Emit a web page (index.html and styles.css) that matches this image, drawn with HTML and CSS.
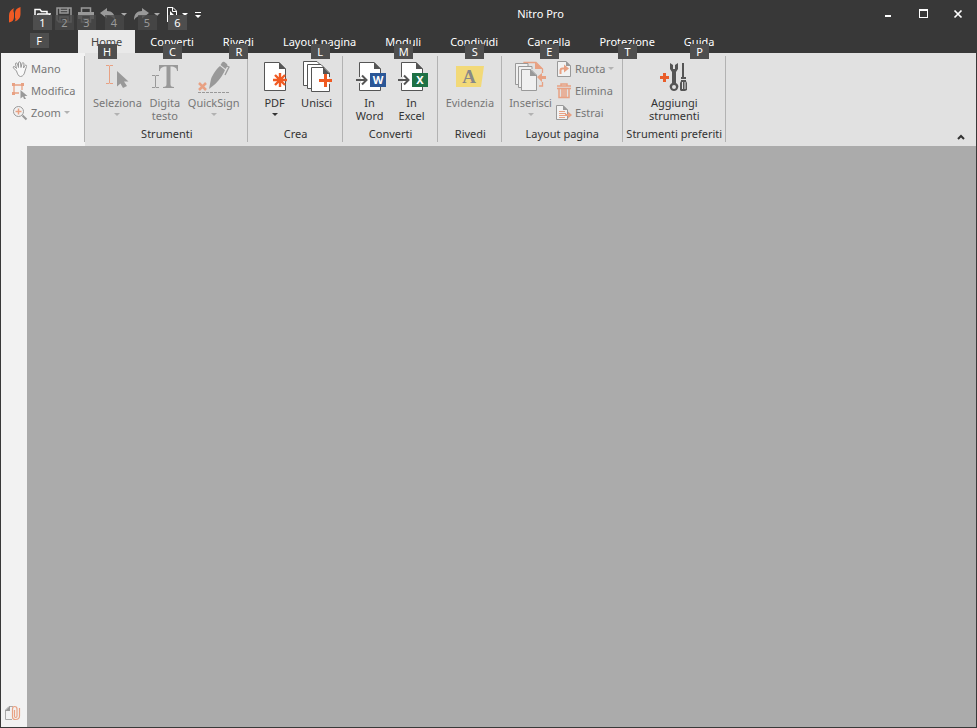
FILE: index.html
```html
<!DOCTYPE html>
<html lang="it">
<head>
<meta charset="utf-8">
<title>Nitro Pro</title>
<link rel="stylesheet" href="styles.css">
</head>
<body>
<div class="window">
  <header class="titlebar">
    <svg class="logo" viewBox="0 0 14 18" aria-hidden="true"><path fill="#f15a24" d="M6.500 2C3 3.500 1 6 1 9.500V16.500C4.500 16 6 14 6 11V7L5.500 5.500C5.300 4 5.500 3 6.500 2ZM12.500 1C9 2 7 4 7 7V11.500L7.500 13Q7.500 14.500 6.500 15.500C10.500 14.500 12.500 11.500 12.500 8Z"/></svg>
    <div class="quick">
      <button class="q" aria-label="Apri"><svg width="18" height="16" viewBox="0 0 18 16"><path fill="none" stroke="#fff" stroke-width="1.500" d="M2 13V2.500H7L8.500 4.500H14V7M2 13L5 7H17L14 13Z"/></svg><kbd>1</kbd></button>
      <button class="q" disabled aria-label="Salva"><svg width="16" height="16" viewBox="0 0 16 16"><path fill="none" stroke="#999" stroke-width="1.500" d="M1 1H15V15H3L1 13ZM4 1V6H12V1M4 15V10H12V15M4 3.500H12"/></svg><kbd>2</kbd></button>
      <button class="q" disabled aria-label="Stampa"><svg width="16" height="16" viewBox="0 0 16 16"><path fill="#999" d="M0 5H16V12H13V9H3V12H0Z"/><path fill="none" stroke="#999" stroke-width="1.500" d="M3.500 5V1H12.500V5M3.500 9V15H12.500V9M5 12H11"/></svg><kbd>3</kbd></button>
      <button class="q split" disabled aria-label="Annulla"><svg width="16" height="16" viewBox="0 0 16 16"><path fill="#999" d="M0 6L7 1V4C12 4 15 7 15 13C13 10 11 8.500 7 8.500V11.500Z"/></svg><i class="caret"></i><kbd>4</kbd></button>
      <button class="q split" disabled aria-label="Ripeti"><svg width="16" height="16" viewBox="0 0 16 16"><path fill="#999" d="M16 6L9 1V4C4 4 1 7 1 13C3 10 5 8.500 9 8.500V11.500Z"/></svg><i class="caret"></i><kbd>5</kbd></button>
      <button class="q split pick" aria-label="Selezione"><svg width="12" height="16" viewBox="0 0 12 16"><path fill="none" stroke="#fff" d="M1.500 15V.5H7L10.500 4V14M6.500 1V4.500H10"/><path fill="#fff" d="M4 4V13L6 11L8 15L9 14L7 10H10Z"/></svg><i class="caret"></i><kbd>6</kbd></button>
      <button class="q more" aria-label="Personalizza"><svg width="8" height="8" viewBox="0 0 8 8"><path fill="#fff" d="M1 1H7V2H1ZM1 4H7L4 7Z"/></svg></button>
    </div>
    <h1>Nitro Pro</h1>
    <div class="controls">
      <button aria-label="Riduci a icona"><svg width="12" height="12" viewBox="0 0 12 12"><path fill="#fff" d="M3 7H9V9H3Z"/></svg></button>
      <button aria-label="Ingrandisci"><svg width="12" height="12" viewBox="0 0 12 12"><path fill="#fff" fill-rule="evenodd" d="M2 1H11V10H2ZM3 3V9H10V3Z"/></svg></button>
      <button aria-label="Chiudi"><svg width="12" height="12" viewBox="0 0 12 12"><path stroke="#fff" stroke-width="1.700" d="M2.500 2.500L9.500 9.500M9.500 2.500L2.500 9.500"/></svg></button>
    </div>
  </header>
  <nav class="tabs">
    <button class="file" aria-label="File"><kbd>F</kbd></button>
    <button class="tab active">Home<kbd>H</kbd></button>
    <button class="tab">Converti<kbd>C</kbd></button>
    <button class="tab">Rivedi<kbd>R</kbd></button>
    <button class="tab">Layout pagina<kbd>L</kbd></button>
    <button class="tab">Moduli<kbd>M</kbd></button>
    <button class="tab">Condividi<kbd>S</kbd></button>
    <button class="tab">Cancella<kbd>E</kbd></button>
    <button class="tab">Protezione<kbd>T</kbd></button>
    <button class="tab">Guida<kbd>P</kbd></button>
  </nav>
  <div class="ribbon">
    <section class="basics">
      <button class="small" disabled><svg width="16" height="16" viewBox="0 0 16 16"><path fill="#f8f8f8" stroke="#999" d="M4.500 10L1.500 7C.5 5.500 2 5 3 6L4.500 7.500L3.500 3C3.500 1.500 5 1.500 5.500 3L6.500 6.500L6.500 2C6.500 .3 8.500 .3 8.500 2L9 6.500L10 2.500C10.500 1 12 1.500 12 3L11.500 7L13 4.500C14 3.500 15 4.500 14.500 5.500L13 10C12.500 13 11 15.500 8.500 15.500C6.500 15.500 5.500 13 4.500 10Z"/></svg>Mano</button>
      <button class="small" disabled><svg width="16" height="16" viewBox="0 0 16 16"><path fill="none" stroke="#e8a183" stroke-width="1.300" d="M2 2H10V10H2Z"/><path fill="#e8a183" d="M0 0H3V3H0ZM9 0H12V3H9ZM0 9H3V12H0Z"/><path fill="#f2f2f2" d="M7 7H12V13H7Z"/><path fill="#999" d="M8.500 7L15.500 13H12.500L14 16H12L11 13.500L8.500 15.500Z"/></svg>Modifica</button>
      <button class="small" disabled><svg width="16" height="16" viewBox="0 0 16 16"><circle cx="6.500" cy="6.500" r="5" fill="none" stroke="#999"/><path stroke="#999" stroke-width="2" d="M10.500 10.500L14.500 14.500"/><path stroke="#e8a183" stroke-width="1.500" d="M3.500 6.500H9.500M6.500 3.500V9.500"/></svg>Zoom<i class="caret"></i></button>
    </section>
    <section class="group">
      <div class="tools spaced">
        <button class="big" disabled><svg width="32" height="32" viewBox="0 0 32 32"><path fill="none" stroke="#e8a183" d="M5 4.500H8L8.500 5L9 4.500H12M8.500 5V22M5 22.500H8L8.500 22L9 22.500H12"/><path fill="#999" d="M16 10L27.500 20.500H23L26 25L22 27L19.500 22.500L16 25.500Z"/></svg><span>Seleziona</span><i class="caret"></i></button>
        <button class="big" disabled><svg width="32" height="32" viewBox="0 0 32 32"><path fill="#999" d="M10 4H29V10H28C28 7 26 5.500 21.500 5.500V23C21.500 25 22 26 25 26V27H14V26C17 26 17.500 25 17.500 23V5.500C13 5.500 11 7 11 10H10Z"/><path fill="none" stroke="#999" d="M3 14.500H6L6.500 15L7 14.500H10M6.500 15V26M3 26.500H6L6.500 26L7 26.500H10"/></svg><span>Digita<br>testo</span></button>
        <button class="big" disabled><svg width="32" height="32" viewBox="0 0 32 32"><path stroke="#e8a183" stroke-width="2.500" d="M1 22L8 29M8 22L1 29"/><path fill="#999" d="M11 28L13 18C15 13 19 7 22 5L27 9C25 14 20 21 16 24ZM22.500 4C24 1 25 0 26.500 1L29 3C30 4 29 6 27.500 8Z"/><path fill="none" stroke="#999" stroke-width="1.300" d="M27.500 4.500L31 6L27 14"/><path stroke="#999" stroke-dasharray="3 1" d="M0 31.500H32"/></svg><span>QuickSign</span><i class="caret"></i></button>
      </div>
      <h2>Strumenti</h2>
    </section>
    <section class="group">
      <div class="tools">
        <button class="big"><svg width="32" height="32" viewBox="0 0 32 32"><path fill="#fff" stroke="#555" d="M5.500 1.500H20L26.500 8V29.500H5.500Z"/><path fill="#555" d="M20 1L27 8H20Z"/><path fill="#fff" d="M16 12H26V27H16Z"/><path fill="#e1e1e1" d="M27 12H28V27H27Z"/><path stroke="#f05a22" stroke-width="2.400" d="M21 12V26M14 19H28M16 14L26 24M26 14L16 24"/></svg><span>PDF</span><i class="caret"></i></button>
        <button class="big"><svg width="32" height="32" viewBox="0 0 32 32"><g fill="#fff" stroke="#555"><path d="M2.500 .5H16L19.500 4V24.500H2.500Z"/><path d="M6.500 3.500H20L23.500 7V27.500H6.500Z"/><path d="M10.500 6.500H23L28.500 12V30.500H10.500Z"/></g><path fill="#555" d="M22 6L29 13H22Z"/><path fill="#fff" d="M27 15H28V24H27Z"/><path fill="#e1e1e1" d="M28 16H29V23H28Z"/><path stroke="#f05a22" stroke-width="3" d="M18 19.500H31M24.500 13V26"/></svg><span>Unisci</span></button>
      </div>
      <h2>Crea</h2>
    </section>
    <section class="group">
      <div class="tools">
        <button class="big"><svg width="32" height="32" viewBox="0 0 32 32"><path fill="#fff" stroke="#555" d="M5.500 1.500H20L26.500 8V29.500H5.500Z"/><path fill="#555" d="M20 1L27 8H20Z"/><path stroke="#e1e1e1" stroke-width="6" d="M2 19H7"/><path fill="none" stroke="#555" stroke-width="2" d="M2 19H12M8 14.500L12.500 19L8 23.500"/><path fill="#2b5797" d="M16 12H32V26H16Z"/><text class="badge" x="24" y="23">W</text></svg><span>In<br>Word</span></button>
        <button class="big"><svg width="32" height="32" viewBox="0 0 32 32"><path fill="#fff" stroke="#555" d="M5.500 1.500H20L26.500 8V29.500H5.500Z"/><path fill="#555" d="M20 1L27 8H20Z"/><path stroke="#e1e1e1" stroke-width="6" d="M2 19H7"/><path fill="none" stroke="#555" stroke-width="2" d="M2 19H12M8 14.500L12.500 19L8 23.500"/><path fill="#1e7145" d="M16 12H32V26H16Z"/><text class="badge" x="24" y="23">X</text></svg><span>In<br>Excel</span></button>
      </div>
      <h2>Converti</h2>
    </section>
    <section class="group">
      <div class="tools spaced">
        <button class="big" disabled><svg width="32" height="32" viewBox="0 0 32 32"><path fill="#f2d978" d="M2 5H30L27 26H2Z"/><text class="letter" x="15" y="22">A</text></svg><span>Evidenzia</span></button>
      </div>
      <h2>Rivedi</h2>
    </section>
    <section class="group layout">
      <div class="tools spaced">
        <button class="big" disabled><svg width="32" height="32" viewBox="0 0 32 32"><path fill="none" stroke="#e8a183" stroke-width="1.300" d="M9 4V1.500H21L27.500 8V12M24 25H27.500V21"/><path fill="#e8a183" d="M20 1L28 8H20ZM22 16L27 12V15H31V18H27V21Z"/><path fill="#f0f0f0" stroke="#999" d="M3 23.500H.5V2.500H13V5M6 26.500H3.500V5.500H17V8"/><path fill="#f0f0f0" stroke="#999" d="M6.500 8.500H16L21.500 14V29.500H6.500Z"/><path fill="#999" d="M15 8L22 15H15Z"/></svg><span>Inserisci</span><i class="caret"></i></button>
        <div class="stack">
          <button class="small" disabled><svg width="16" height="16" viewBox="0 0 16 16"><path fill="#f2f2f2" stroke="#999" d="M1.500 .5H10L14.500 5V15.500H1.500Z"/><path fill="#999" d="M10 0L15 5H10Z"/><path fill="none" stroke="#e8a183" stroke-width="2" d="M4.500 13V9.500Q4.500 7.500 6.500 7.500H9"/><path fill="#e8a183" d="M8 3.500L13 7.500L8 11.500Z"/></svg>Ruota<i class="caret"></i></button>
          <button class="small" disabled><svg width="16" height="16" viewBox="0 0 16 16"><path fill="none" stroke="#e8a183" stroke-width="1.500" d="M1 3H15M5 3V1H11V3M1 5.500H15M3 6V14.500H13V6M6 6V14M8 6V14M10 6V14"/></svg>Elimina</button>
          <button class="small" disabled><svg width="16" height="16" viewBox="0 0 16 16"><path fill="#f2f2f2" stroke="#999" d="M.5 .5H7L11.500 5V14.500H.5Z"/><path fill="#999" d="M7 0L12 5H7Z"/><path stroke="#e8a183" d="M3 6.500H9M3 8.500H10M3 10.500H10M3 12.500H9"/><path fill="#e8a183" d="M9 9H12V6.500L16 10L12 13.500V11H9Z"/></svg>Estrai</button>
        </div>
      </div>
      <h2>Layout pagina</h2>
    </section>
    <section class="group favorites">
      <div class="tools">
        <button class="big"><svg width="32" height="32" viewBox="0 0 32 32"><path stroke="#e95d2a" stroke-width="3" d="M2 16.500H11M6.500 12V21"/><path fill="#555" d="M12 2L15 4V8H17V4L20 2V8L18 11V22C20 23 21 25 20 27C19 31 13 31 12 27C11 25 12 23 14 22V11L12 8Z"/><circle cx="16" cy="26" r="2" fill="#e1e1e1"/><path fill="#555" d="M24 2H26V16H28V20L29 22V29L27 30H23L22 29V22L23 20V16H24Z"/><path stroke="#e1e1e1" d="M22 18.500H29M24.500 21V28M27 21V28"/></svg><span>Aggiungi<br>strumenti</span></button>
      </div>
      <h2>Strumenti preferiti</h2>
    </section>
    <button class="collapse" aria-label="Comprimi"><svg width="8" height="6" viewBox="0 0 8 6"><path fill="none" stroke="#333" stroke-width="2" d="M1 5L4 2L7 5"/></svg></button>
  </div>
  <div class="body">
    <aside class="rail">
      <button aria-label="Allegati"><svg width="16" height="16" viewBox="0 0 16 16"><path fill="none" stroke="#aaa" d="M7 14.500H.5V5L4 1.500H8"/><path fill="#999" d="M0 6L5 1V6Z"/><path fill="none" stroke="#e8a183" stroke-width="1.200" d="M9.500 5V11Q9.500 12.500 10.700 12.500Q12 12.500 12 11V4Q12 1.500 9.700 1.500Q7.500 1.500 7.500 4V12Q7.500 14.500 10.500 14.500Q14.500 14.500 14.500 11V3"/></svg></button>
    </aside>
    <main></main>
  </div>
</div>
</body>
</html>
```
FILE: styles.css
```css
* {
  box-sizing: border-box;
}

body {
  margin: 0;
  font: 11px/13px "Noto Sans", "Open Sans", sans-serif;
  color: #333;
}

button {
  margin: 0;
  padding: 0;
  border: 0;
  background: none;
  font: inherit;
  color: inherit;
}

button:disabled {
  color: #777;
}

svg {
  display: block;
  flex: none;
}

h1,
h2 {
  margin: 0;
  font: inherit;
}

kbd {
  position: absolute;
  left: 50%;
  width: 19px;
  height: 15px;
  margin-left: -9px;
  background: #4e4e4e;
  color: #fff;
  font: 11px/15px "Noto Sans", "Open Sans", sans-serif;
  text-align: center;
  z-index: 1;
}

.caret {
  border: 3px solid transparent;
  border-top-color: currentColor;
  border-bottom: 0;
}

.window {
  min-height: 100vh;
  display: flex;
  flex-direction: column;
  border: 1px solid #383838;
  border-top: 0;
}

/* Title bar */
.titlebar {
  display: flex;
  align-items: stretch;
  height: 30px;
  background: #383838;
  color: #fff;
}

.logo {
  width: 14px;
  height: 18px;
  margin: 6px 9px 0 7px;
}

.quick {
  display: flex;
  margin-right: 5px;
}

.q {
  position: relative;
  display: flex;
  justify-content: center;
  align-items: flex-start;
  width: 22px;
  padding-top: 7px;
}

.q kbd {
  bottom: 0;
}

.q:disabled kbd {
  background: #484848cc;
  color: #999;
}

.split {
  width: 33px;
  justify-content: space-between;
  padding-left: 3px;
  padding-right: 3px;
}

.pick {
  width: 28px;
}

.q .caret {
  margin-top: 6px;
}

.q:disabled .caret {
  color: #aaa;
}

.more {
  width: 14px;
  padding-top: 11px;
}

.titlebar h1 {
  flex: 1;
  line-height: 28px;
  text-align: center;
}

.controls {
  display: flex;
}

.controls button {
  width: 35px;
  padding: 8px 11px 10px;
}

/* Tab strip */
.tabs {
  display: flex;
  height: 23px;
  background: #383838;
  color: #fff;
}

.file {
  position: relative;
  width: 75px;
  margin-right: 2px;
}

.file kbd {
  top: 3px;
}

.tab {
  position: relative;
  padding: 1px 14px 1px;
  margin-right: 1px;
  line-height: 20px;
  white-space: nowrap;
}

.tab kbd {
  top: 14px;
}

.active {
  padding-left: 13px;
  padding-right: 13px;
  background: #e9e9e9;
  color: #444;
}

/* Ribbon */
.ribbon {
  display: flex;
  min-height: 93px;
  background: #e1e1e1;
}

.basics {
  display: flex;
  flex-direction: column;
  align-items: flex-start;
  width: 84px;
  padding: 4px 0 0 11px;
  background: linear-gradient(#b2b2b2, #b2b2b2) 100% 3px / 1px 86px no-repeat #f2f2f2;
}

.group {
  display: flex;
  flex-direction: column;
  justify-content: space-between;
  margin: 3px 0 4px;
  padding: 0 3px 0 5px;
  border-right: 1px solid #b2b2b2;
}

.group h2 {
  line-height: 17px;
  text-align: center;
  white-space: nowrap;
}

.tools {
  display: flex;
  justify-content: center;
  align-items: flex-start;
  padding: 0 1px;
}

.spaced {
  gap: 7px;
  padding: 0 4px 0 3px;
}

.big {
  display: flex;
  flex-direction: column;
  align-items: center;
  min-width: 42px;
  padding-top: 5px;
}

.spaced .big {
  min-width: 32px;
}

.big span {
  margin-top: 3px;
}

.big .caret {
  margin-top: 4px;
}

.big:disabled .caret,
.small .caret {
  color: #b2b2b2;
}

.layout {
  padding: 0 4px;
}

.layout .tools {
  gap: 4px;
}

.favorites {
  padding: 0 3px;
}

.stack {
  display: flex;
  flex-direction: column;
  align-items: flex-start;
  padding-top: 1px;
}

.small {
  display: flex;
  align-items: center;
  gap: 3px;
  height: 22px;
}

.small svg {
  margin-top: 2px;
}

.collapse {
  align-self: flex-end;
  margin-left: auto;
  padding: 0 11px 6px;
}

.badge {
  fill: #fff;
  font: bold 11px "Noto Sans", sans-serif;
  text-anchor: middle;
}

.letter {
  fill: #888;
  font: bold 19px "Liberation Serif", serif;
  text-anchor: middle;
}

/* Work area */
.body {
  flex: 1;
  display: flex;
}

.rail {
  display: flex;
  align-items: flex-end;
  width: 26px;
  padding: 0 4px 6px;
  background: #f2f2f2;
}

main {
  flex: 1;
  background: #ababab;
}
```
